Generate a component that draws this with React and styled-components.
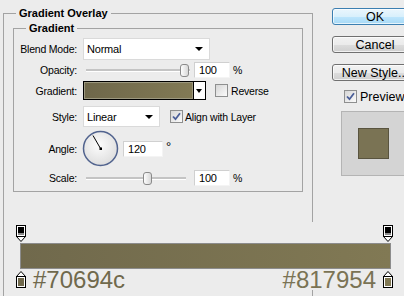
import React from 'react';
import styled, { createGlobalStyle } from 'styled-components';

const GlobalStyle = createGlobalStyle`
  html, body {
    margin: 0;
    padding: 0;
    background: #ececec;
    overflow: hidden;
  }
  body {
    font-family: 'Liberation Sans', Arial, sans-serif;
    font-size: 10.5px;
    letter-spacing: -0.2px;
    color: #000;
  }
`;

const Dialog = styled.div`
  position: relative;
  display: flex;
  align-items: flex-start;
  width: 404px;
  height: 296px;
  overflow: hidden;
`;

const LeftPane = styled.div`
  flex: none;
  width: 310px;
  margin-left: 3px;
`;

const Group = styled.fieldset`
  margin: ${p => (p.$outer ? '7px 0 0' : '2px 9px 0')};
  padding: ${p => (p.$outer ? '0 0 140px' : '3px 0 5px')};
  border: 1px solid #a3a3a3;
  min-width: 0;
`;

const Legend = styled.legend`
  margin-left: 12px;
  padding: 0 3px;
  font-size: 11px;
  line-height: 13px;
  font-weight: bold;
  letter-spacing: 0;
`;

const Row = styled.div`
  display: flex;
  align-items: center;
  height: ${p => p.$h}px;
  margin-top: ${p => p.$mt || 0}px;
`;

const Label = styled.span`
  flex: none;
  width: 63px;
  padding-right: 1px;
  margin-right: 5px;
  text-align: right;
`;

const Select = styled.div`
  position: relative;
  box-sizing: border-box;
  width: ${p => p.$w}px;
  height: ${p => p.$h}px;
  display: flex;
  align-items: center;
  padding-left: 3px;
  background: #fff;
  border: 1px solid #dadada;
  font-size: 11px;

  &::after {
    content: '';
    position: absolute;
    right: 6px;
    top: 50%;
    margin-top: -2px;
    border-left: 4px solid transparent;
    border-right: 4px solid transparent;
    border-top: 4px solid #000;
  }
`;

const Slider = styled.div`
  position: relative;
  flex: none;
  width: ${p => p.$w}px;
  height: 16px;
  margin-right: 4px;
`;

const Track = styled.div`
  position: absolute;
  left: 3px;
  right: 0;
  top: 7px;
  height: 2px;
  background: #c4c4c4;
  border-bottom: 1px solid #fff;
`;

const Thumb = styled.div`
  position: absolute;
  top: 2px;
  width: 7px;
  height: 11px;
  border: 1px solid #8a8a8a;
  border-radius: 3px;
  background: linear-gradient(to right, #fdfdfd, #d8d8d8);
`;

const Field = styled.div`
  box-sizing: border-box;
  flex: none;
  width: ${p => p.$w}px;
  height: 16px;
  display: flex;
  align-items: center;
  padding-left: 4px;
  background: #fff;
  border: 1px solid #dedede;
  border-color: #d0d0d0 #f4f4f4 #f4f4f4 #d0d0d0;
  font-size: 11px;
`;

const Unit = styled.span`
  margin-left: 3px;
  align-self: ${p => (p.$top ? 'flex-start' : 'center')};
  margin-top: ${p => (p.$top ? '9px' : '0')};
  font-size: ${p => (p.$top ? '13px' : '10.5px')};
`;

const GradientPicker = styled.div`
  box-sizing: border-box;
  flex: none;
  display: flex;
  width: 123px;
  height: 19px;
  border: 1px solid #000;
`;

const Swatch = styled.div`
  flex: 1;
  background: linear-gradient(100deg, #6e674a, #827a55);
  box-shadow: inset 0 0 0 1px #9c987f;
`;

const ArrowBox = styled.div`
  position: relative;
  width: 11px;
  border-left: 1px solid #000;
  background: #fff;

  &::after {
    content: '';
    position: absolute;
    left: 2px;
    top: 7px;
    border-left: 3.5px solid transparent;
    border-right: 3.5px solid transparent;
    border-top: 4px solid #000;
  }
`;

const Check = styled.span`
  box-sizing: border-box;
  flex: none;
  display: inline-flex;
  align-items: center;
  justify-content: center;
  width: 13px;
  height: 13px;
  margin-left: ${p => p.$ml || 0}px;
  margin-right: ${p => p.$mr || 3}px;
  border: 1px solid #8e8f8f;
  background: linear-gradient(135deg, #d6d6d6, #fbfbfb);
`;

const Angle = styled.div`
  flex: none;
  width: 37px;
  height: 37px;
  margin-left: -1px;
  margin-right: 4px;
`;

const Side = styled.div`
  flex: none;
  width: 86px;
  margin-left: 19px;
  padding-top: 8px;
  display: flex;
  flex-direction: column;
  font-size: 12.5px;
  letter-spacing: 0;
`;

const Button = styled.div`
  box-sizing: border-box;
  height: 17px;
  margin-bottom: 11px;
  display: flex;
  align-items: center;
  justify-content: center;
  white-space: nowrap;
  border: 1px solid ${p => (p.$primary ? '#3c7fb1' : '#707070')};
  border-radius: 3px;
  background: ${p =>
    p.$primary
      ? 'linear-gradient(#eaf6fd 0%, #d9f0fc 50%, #bee6fd 51%, #a7d9f5 100%)'
      : 'linear-gradient(#f2f2f2 0%, #ebebeb 50%, #dddddd 51%, #cfcfcf 100%)'};
  box-shadow: inset 0 0 0 1px rgba(255, 255, 255, 0.7);
`;

const PreviewRow = styled.div`
  display: flex;
  align-items: center;
  margin: -2px 0 0 12px;
  height: 13px;
`;

const PreviewBox = styled.div`
  box-sizing: border-box;
  width: 65px;
  height: 65px;
  margin: 8px 0 0 9px;
  display: flex;
  align-items: center;
  justify-content: center;
  background: #d4d4d4;
  border: 1px solid #b4b4b4;
`;

const PreviewSwatch = styled.div`
  box-sizing: border-box;
  width: 31px;
  height: 31px;
  background: #7a7354;
  border: 1px solid #59543f;
`;

const Editor = styled.div`
  position: absolute;
  top: 222px;
  left: 5px;
  right: 0;
  height: 68px;
  background: #ececec;
  box-sizing: border-box;
  padding: 3px 0 0 11px;
`;

const EditorInner = styled.div`
  width: 377px;
  display: flex;
  flex-direction: column;
`;

const StopRow = styled.div`
  display: flex;
  justify-content: space-between;
  align-items: flex-start;
`;

const Bar = styled.div`
  box-sizing: border-box;
  height: 26px;
  margin: 1px 2px 0 4px;
  border: 1px solid #8c8c8c;
  background: linear-gradient(to right, #70694c, #817954);
`;

const Hex = styled.span`
  font-family: 'Liberation Sans', Arial, sans-serif;
  font-size: 24px;
  line-height: 22px;
  letter-spacing: 0;
  color: ${p => p.$color};
  margin: ${p => (p.$right ? '0 7px 0 auto' : '0 0 0 7px')};
`;

const TopStop = () => (
  <svg width="10" height="17" viewBox="0 0 10 17">
    <rect x="0.5" y="0.5" width="9" height="11" fill="#fff" stroke="#000" />
    <rect x="2" y="2" width="6" height="6" fill="#000" />
    <rect x="2" y="8" width="6" height="2" fill="#8a8a8a" />
    <polygon points="0.5,11.5 9.5,11.5 5,16.5" fill="#fff" stroke="#000" />
  </svg>
);

const BottomStop = ({ color }) => (
  <svg width="10" height="17" viewBox="0 0 10 17" style={{ marginTop: 2, flex: 'none' }}>
    <polygon points="5,0.5 9.5,5.5 0.5,5.5" fill="#fff" stroke="#000" />
    <rect x="0.5" y="5.5" width="9" height="11" fill="#fff" stroke="#000" />
    <rect x="2" y="7" width="6" height="8" fill={color} />
  </svg>
);

const CheckMark = () => (
  <svg width="9" height="9" viewBox="0 0 9 9">
    <path d="M1 4.5 L3.5 7.2 L8 1.2" fill="none" stroke="#4a5e98" strokeWidth="1.8" />
  </svg>
);

const Dial = () => (
  <svg width="37" height="37" viewBox="0 0 37 37">
    <defs>
      <radialGradient id="dialFill" cx="45%" cy="40%" r="60%">
        <stop offset="0%" stopColor="#fdfdfd" />
        <stop offset="100%" stopColor="#dedede" />
      </radialGradient>
    </defs>
    <circle cx="18.5" cy="18.5" r="17" fill="url(#dialFill)" stroke="#51638e" strokeWidth="1.5" />
    <line x1="18.5" y1="18.5" x2="11" y2="5.5" stroke="#000" strokeWidth="1" />
    <rect x="17.5" y="17.5" width="2.5" height="2.5" fill="#000" />
  </svg>
);

const App = () => (
  <>
    <GlobalStyle />
    <Dialog>
      <LeftPane>
        <Group $outer>
          <Legend>Gradient Overlay</Legend>
          <Group>
            <Legend>Gradient</Legend>
            <Row $h={22}>
              <Label>Blend Mode:</Label>
              <Select $w={127} $h={22}>Normal</Select>
            </Row>
            <Row $h={16} $mt={2}>
              <Label>Opacity:</Label>
              <Slider $w={107}>
                <Track />
                <Thumb style={{ left: 97 }} />
              </Slider>
              <Field $w={36}>100</Field>
              <Unit>%</Unit>
            </Row>
            <Row $h={19} $mt={3}>
              <Label>Gradient:</Label>
              <GradientPicker>
                <Swatch />
                <ArrowBox />
              </GradientPicker>
              <Check $ml={9} />
              <span>Reverse</span>
            </Row>
            <Row $h={21} $mt={6}>
              <Label>Style:</Label>
              <Select $w={77} $h={21}>Linear</Select>
              <Check $ml={10} $mr={2}>
                <CheckMark />
              </Check>
              <span>Align with Layer</span>
            </Row>
            <Row $h={37} $mt={3}>
              <Label>Angle:</Label>
              <Angle>
                <Dial />
              </Angle>
              <Field $w={40}>120</Field>
              <Unit $top>°</Unit>
            </Row>
            <Row $h={16} $mt={3}>
              <Label>Scale:</Label>
              <Slider $w={107}>
                <Track style={{ right: 4 }} />
                <Thumb style={{ left: 60 }} />
              </Slider>
              <Field $w={36}>100</Field>
              <Unit>%</Unit>
            </Row>
          </Group>
        </Group>
      </LeftPane>

      <Side>
        <Button $primary>OK</Button>
        <Button>Cancel</Button>
        <Button>New Style...</Button>
        <PreviewRow>
          <Check $mr={3}>
            <CheckMark />
          </Check>
          <span>Preview</span>
        </PreviewRow>
        <PreviewBox>
          <PreviewSwatch />
        </PreviewBox>
      </Side>

      <Editor>
        <EditorInner>
          <StopRow>
            <TopStop />
            <TopStop />
          </StopRow>
          <Bar />
          <StopRow>
            <BottomStop color="#70694c" />
            <Hex $color="#70694c">#70694c</Hex>
            <Hex $color="#7a7354" $right>#817954</Hex>
            <BottomStop color="#817954" />
          </StopRow>
        </EditorInner>
      </Editor>
    </Dialog>
  </>
);

export default App;
